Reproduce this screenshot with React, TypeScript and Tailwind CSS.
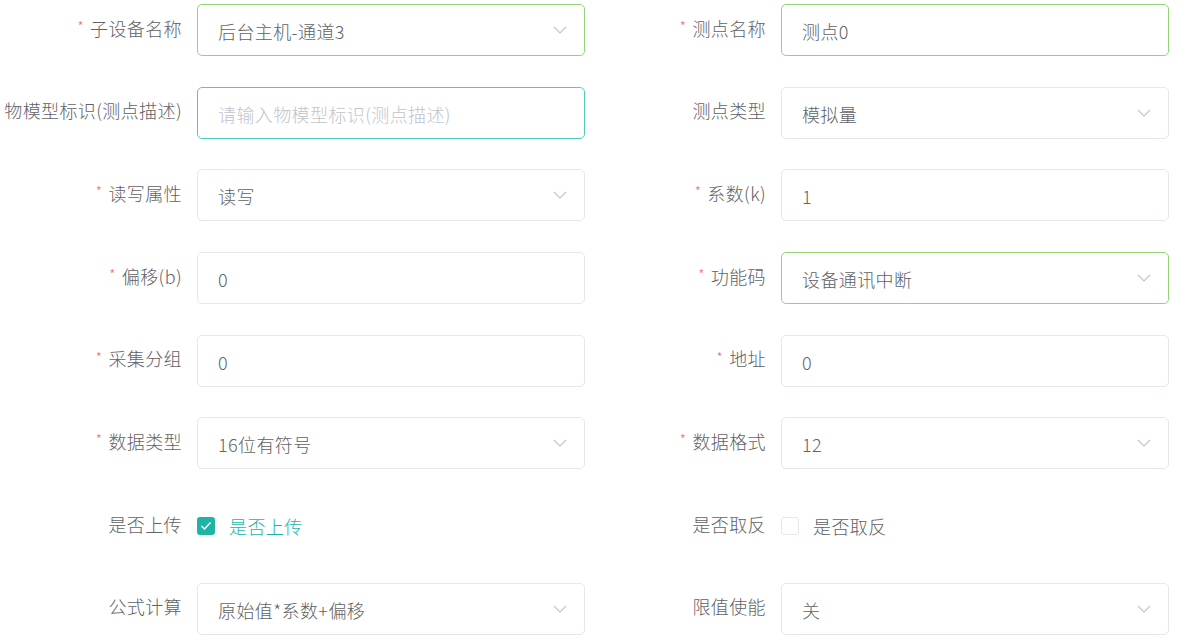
import React from 'react';

type Field = {
  label: string;
  required?: boolean;
  value?: string;
  placeholder?: string;
  select?: boolean;
  tone?: 'green' | 'teal';
  checkbox?: { checked: boolean };
};

const rows: [Field, Field][] = [
  [
    { label: '子设备名称', required: true, value: '后台主机-通道3', select: true, tone: 'green' },
    { label: '测点名称', required: true, value: '测点0', tone: 'green' },
  ],
  [
    { label: '物模型标识(测点描述)', placeholder: '请输入物模型标识(测点描述)', tone: 'teal' },
    { label: '测点类型', value: '模拟量', select: true },
  ],
  [
    { label: '读写属性', required: true, value: '读写', select: true },
    { label: '系数(k)', required: true, value: '1' },
  ],
  [
    { label: '偏移(b)', required: true, value: '0' },
    { label: '功能码', required: true, value: '设备通讯中断', select: true, tone: 'green' },
  ],
  [
    { label: '采集分组', required: true, value: '0' },
    { label: '地址', required: true, value: '0' },
  ],
  [
    { label: '数据类型', required: true, value: '16位有符号', select: true },
    { label: '数据格式', required: true, value: '12', select: true },
  ],
  [
    { label: '是否上传', checkbox: { checked: true } },
    { label: '是否取反', checkbox: { checked: false } },
  ],
  [
    { label: '公式计算', value: '原始值*系数+偏移', select: true },
    { label: '限值使能', value: '关', select: true },
  ],
];

const Chevron = () => (
  <svg width="14" height="8" viewBox="0 0 14 8" fill="none" className="shrink-0">
    <path d="M1 1l6 6 6-6" stroke="#c0c4cc" strokeWidth="1.2" />
  </svg>
);

const Control = ({ f }: { f: Field }) => {
  if (f.checkbox) {
    const on = f.checkbox.checked;
    return (
      <div className="flex h-[52px] items-center">
        <span
          className={
            on
              ? 'flex h-[18px] w-[18px] items-center justify-center rounded-[3px] bg-[#1fb5a2]'
              : 'h-[18px] w-[18px] rounded-[3px] border border-[#e4e7ed] bg-white'
          }
        >
          {on && (
            <svg width="12" height="10" viewBox="0 0 12 10" fill="none">
              <path d="M1.5 5l3 3 6-6.5" stroke="#fff" strokeWidth="1.4" />
            </svg>
          )}
        </span>
        <span className={`ml-[14px] text-[18px] ${on ? 'text-[#1fb5a2]' : 'text-[#606266]'}`}>{f.label}</span>
      </div>
    );
  }
  const border =
    f.tone === 'green' ? 'border-[#95d475]' : f.tone === 'teal' ? 'border-[#4ecbbb]' : 'border-[#e4e7ed]';
  return (
    <div
      className={`flex h-[52px] w-[388px] shrink-0 items-center rounded-[5px] border bg-white pl-[20px] pr-[17px] ${border}`}
    >
      <span className={`flex-1 truncate pt-[3px] text-[18px] ${f.value ? 'text-[#606266]' : 'text-[#c0c4cc]'}`}>
        {f.value ?? f.placeholder}
      </span>
      {f.select && <Chevron />}
    </div>
  );
};

const Item = ({ f }: { f: Field }) => (
  <div className="flex h-[52px] w-[584px] shrink-0 items-center">
    <label className="mt-[-4px] flex w-[197px] shrink-0 items-center justify-end whitespace-nowrap pr-[15px] text-[18px] text-[#606266]">
      {f.required && <span className="mr-[6px] mt-[-3px] text-[14px] text-[#f56c6c]">*</span>}
      {f.label}
    </label>
    <Control f={f} />
  </div>
);

export default function App() {
  return (
    <div
      className="min-h-[641px] w-[1188px] overflow-hidden bg-white pt-[4px] font-light tracking-[0.4px]"
      style={{ fontFamily: '"Noto Sans CJK SC", "Noto Sans", sans-serif' }}
    >
      {rows.map((r, i) => (
        <div key={i} className="mb-[30.7px] flex">
          <Item f={r[0]} />
          <Item f={r[1]} />
        </div>
      ))}
    </div>
  );
}
